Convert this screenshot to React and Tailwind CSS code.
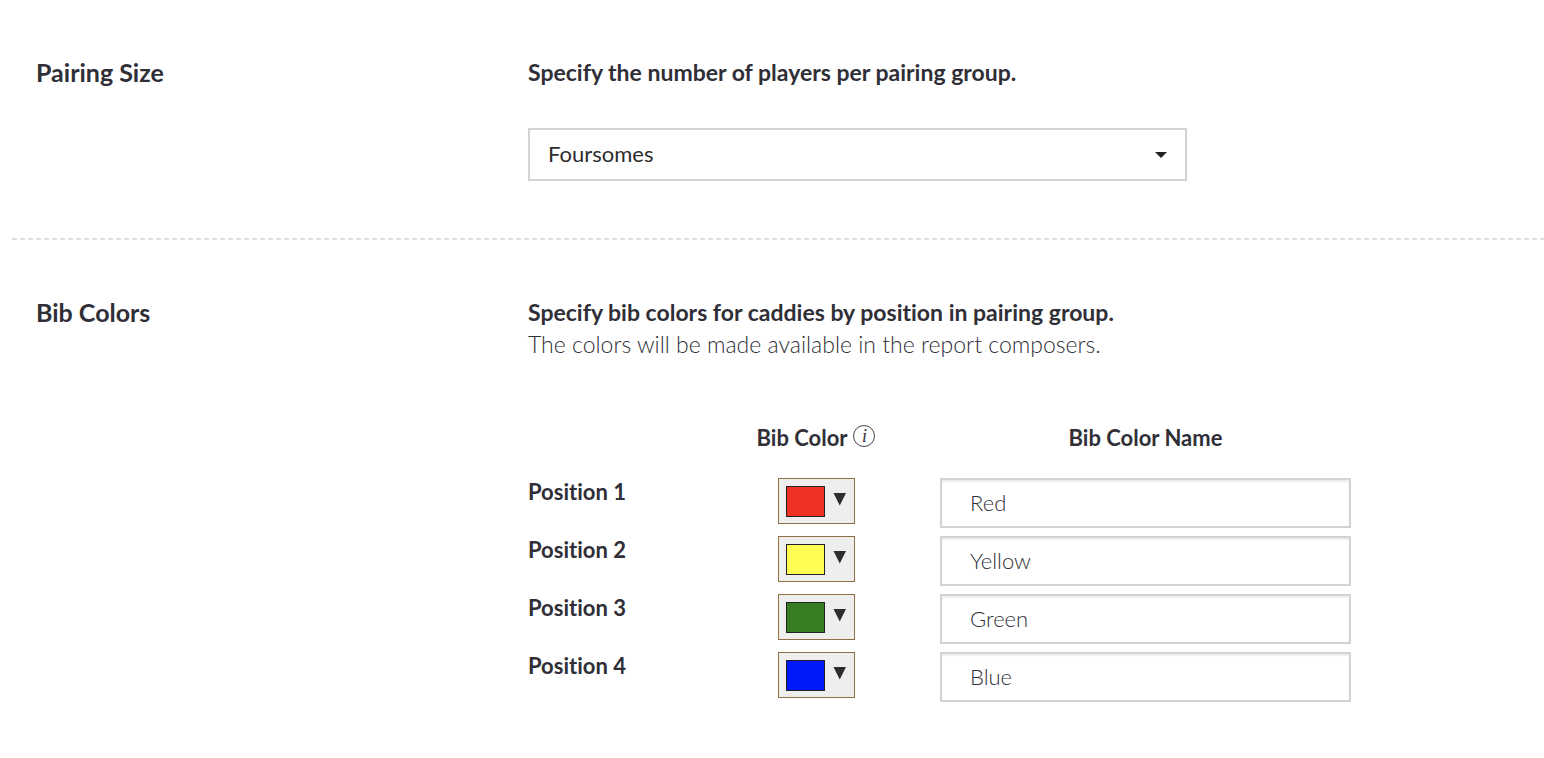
// CaddieSettings.js
import React, { useState } from "react";

const initialBibs = [
  { position: 1, name: "Red", swatch: "bg-[#ee3123]" },
  { position: 2, name: "Yellow", swatch: "bg-[#fffd54]" },
  { position: 3, name: "Green", swatch: "bg-[#377e22]" },
  { position: 4, name: "Blue", swatch: "bg-[#0019fa]" },
];

function Section({ title, children }) {
  return (
    <section className="grid grid-cols-[492px_1fr] pl-6 pt-14 pb-[57px]">
      <h2 className="text-[25px] leading-8 font-bold">{title}</h2>
      <div>{children}</div>
    </section>
  );
}

function ColorPicker({ position, swatch }) {
  return (
    <button
      type="button"
      aria-label={`Bib color for position ${position}`}
      className="flex h-[46px] w-[77px] items-center gap-2 border border-[#8f6f43] bg-[#eeeeee] px-[7px]"
    >
      <span className={`h-[31px] w-[39px] border border-[#222] ${swatch}`} />
      <svg width="14" height="14" viewBox="0 0 14 14" className="mb-1 shrink-0">
        <path d="M0.5 1h12.5L6.75 13.5z" fill="#2d2d2d" />
      </svg>
    </button>
  );
}

export default function App() {
  const [size, setSize] = useState("Foursomes");
  const [bibs, setBibs] = useState(initialBibs);

  const rename = (index, name) => {
    setBibs(bibs.map((bib, i) => (i === index ? { ...bib, name } : bib)));
  };

  return (
    <main className="min-h-screen bg-white pl-3 font-['Lato',sans-serif] text-[#302f37] [font-variant-ligatures:none]">
      <Section title="Pairing Size">
        <label htmlFor="pairing-size" className="block text-[23px] leading-8 font-bold">
          Specify the number of players per pairing group.
        </label>
        <div className="relative mt-10 max-w-[659px]">
          <select
            id="pairing-size"
            value={size}
            onChange={(e) => setSize(e.target.value)}
            className="h-[53px] w-full appearance-none border-2 border-[#d3d3d3] bg-white px-[18px] pb-0.5 text-[22px] text-[#2d2d2d]"
          >
            <option>Twosomes</option>
            <option>Threesomes</option>
            <option>Foursomes</option>
          </select>
          <svg
            width="12"
            height="6"
            viewBox="0 0 12 6"
            className="pointer-events-none absolute top-1/2 right-5 -translate-y-1/2"
          >
            <path d="M0 0h12L6 6z" fill="#222" />
          </svg>
        </div>
      </Section>

      <div className="h-0.5 bg-[repeating-linear-gradient(90deg,#dedede_0_5px,transparent_5px_8px)]" />

      <Section title="Bib Colors">
        <p className="text-[23px] leading-8 font-bold">
          Specify bib colors for caddies by position in pairing group.
        </p>
        <p className="text-[23px] leading-8 font-light">
          The colors will be made available in the report composers.
        </p>

        <table className="mt-[62px] w-full max-w-[823px] table-fixed text-[22px] leading-7">
          <thead>
            <tr>
              <td className="w-[200px]" />
              <th scope="col" className="w-[176px] pb-6 font-bold">
                <span className="flex h-8 items-center justify-center gap-1.5">
                  Bib Color
                  <button
                    type="button"
                    aria-label="About bib color"
                    className="mb-1 flex size-[22px] items-center justify-center rounded-full border border-[#45444b] font-['Liberation_Serif',serif] text-lg leading-5 font-normal italic"
                  >
                    i
                  </button>
                </span>
              </th>
              <th scope="col" className="pb-6 pl-9 font-bold">
                Bib Color Name
              </th>
            </tr>
          </thead>
          <tbody>
            {bibs.map((bib, index) => (
              <tr key={bib.position} className="h-[58px] align-top">
                <th scope="row" className="text-left font-bold">
                  <label htmlFor={`bib-${bib.position}`}>Position {bib.position}</label>
                </th>
                <td className="pl-[50px]">
                  <ColorPicker position={bib.position} swatch={bib.swatch} />
                </td>
                <td className="pl-9">
                  <input
                    id={`bib-${bib.position}`}
                    type="text"
                    value={bib.name}
                    onChange={(e) => rename(index, e.target.value)}
                    className="block h-[50px] w-full border-2 border-[#d3d3d3] px-7 pb-0.5 font-light shadow-[inset_0_2px_2px_#eeeeee]"
                  />
                </td>
              </tr>
            ))}
          </tbody>
        </table>
      </Section>
    </main>
  );
}
